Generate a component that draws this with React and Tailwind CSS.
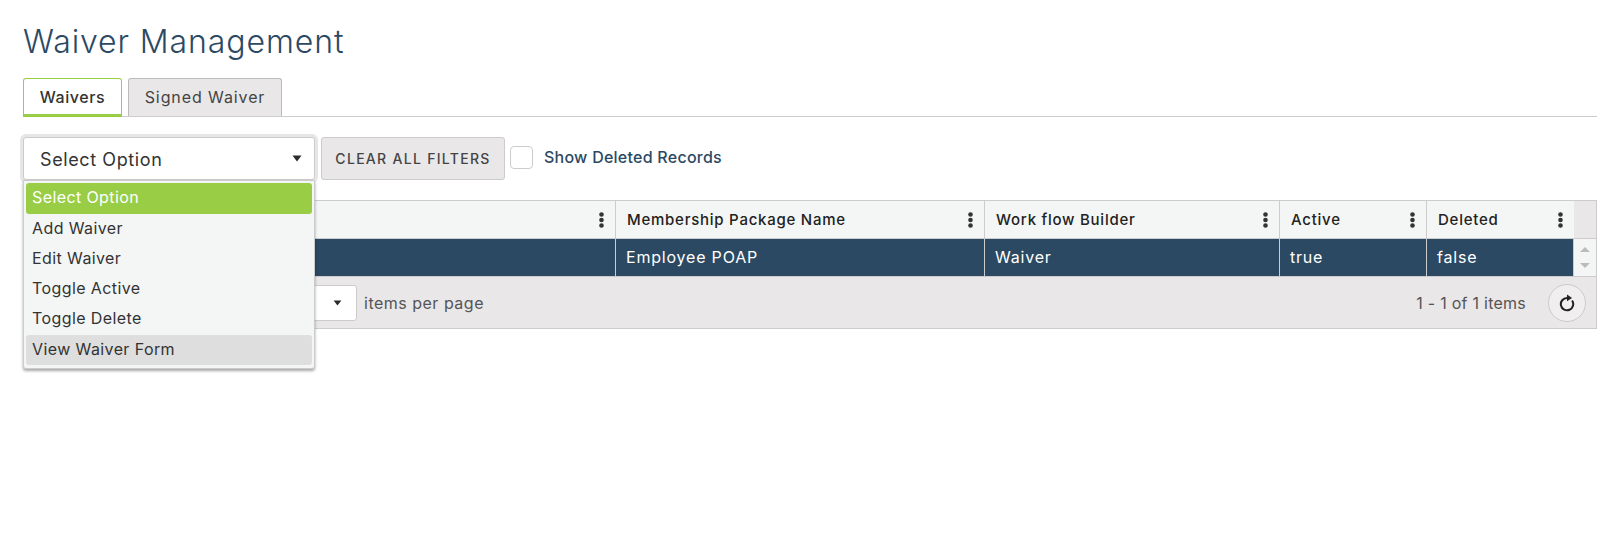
import React from 'react';

const menuItems = ['Add Waiver', 'Edit Waiver', 'Toggle Active', 'Toggle Delete'];

const columns = [
  { label: '', cell: '', width: 'w-[592px]' },
  { label: 'Membership Package Name', cell: 'Employee POAP', width: 'w-[369px]' },
  { label: 'Work flow Builder', cell: 'Waiver', width: 'w-[295px]' },
  { label: 'Active', cell: 'true', width: 'w-[147px]' },
  { label: 'Deleted', cell: 'false', width: 'w-[147px]' },
];

const Caret = ({ className }) => (
  <svg viewBox="0 0 10 7" className={className}>
    <path d="M0.5 0.5h9L5 6.5z" fill="#2b2b2b" />
  </svg>
);

const Kebab = () => (
  <svg viewBox="0 0 5 16" className="w-[5px] h-4 shrink-0">
    <circle cx="2.5" cy="2.5" r="2.3" fill="#333" />
    <circle cx="2.5" cy="8" r="2.3" fill="#333" />
    <circle cx="2.5" cy="13.5" r="2.3" fill="#333" />
  </svg>
);

const App = () => {
  return (
    <div className="relative h-[537px] bg-white px-[23px] font-['Inter',sans-serif] text-[#333]">
      <h1 className="pt-[21px] h-[78px] text-[32px] leading-[42px] font-light tracking-[0.9px] text-[#2c4963]">
        Waiver Management
      </h1>

      {/* Tabs */}
      <div className="flex h-[39px] w-[1574px] gap-[6px] border-b border-[#ccc]">
        <div className="w-[99px] h-[39px] flex items-center justify-center rounded-t-[3px] border border-b-[3px] border-[#98cd45] bg-white text-[16px] font-medium tracking-[0.6px] text-[#333]">
          Waivers
        </div>
        <div className="w-[154px] h-[38px] flex items-center justify-center pb-[2px] rounded-t-[3px] border border-b-0 border-[#bbb] bg-[#e9e7e8] text-[16px] tracking-[0.9px] text-[#444]">
          Signed Waiver
        </div>
      </div>

      {/* Filters */}
      <div className="flex items-start mt-[20px] h-[63px]">
        <div className="w-[292px] h-[43px] flex items-center justify-between pt-[2px] pl-[16px] pr-[12px] rounded-[3px] border border-[#ccc] bg-white shadow-[0_0_0_3px_#e6e6e6] text-[18px] tracking-[0.6px] text-[#333]">
          Select Option
          <Caret className="w-[10px] h-[7px] mb-[2px]" />
        </div>
        <div className="ml-[6px] w-[184px] h-[43px] flex items-center justify-center rounded-[3px] border border-[#ccc] bg-[#e9e7e8] text-[14px] font-medium tracking-[1.3px] text-[#444]">
          CLEAR ALL FILTERS
        </div>
        <div className="ml-[5px] mt-[9px] w-[23px] h-[23px] rounded-[4px] border border-[#ccc] bg-white" />
        <div className="ml-[11px] mt-[10px] text-[16px] leading-[20px] font-medium tracking-[0.25px] text-[#2c4963]">
          Show Deleted Records
        </div>
      </div>

      {/* Grid */}
      <div className="w-[1574px] border border-[#ccc]">
        <div className="flex h-[38px] bg-[#e9e7e8] border-b border-[#ccc]">
          {columns.map((col) => (
            <div key={col.label} className={`${col.width} flex items-center justify-between pl-[11px] pr-[11px] bg-[#f4f6f5] border-r border-[#ccc] text-[15px] font-[450] tracking-[0.75px] text-[#222] last:border-r-0`}>
              <span className="pt-[2px]">{col.label}</span>
              <Kebab />
            </div>
          ))}
        </div>
        <div className="flex h-[38px] bg-[#f4f6f5] border-b border-[#ccc]">
          {columns.map((col) => (
            <div key={col.label} className={`${col.width} flex items-center pl-[10px] pb-[2px] bg-[#2c4963] border-r border-[#ccc] text-[16px] tracking-[0.8px] text-white last:border-r-0`}>
              {col.cell}
            </div>
          ))}
          <div className="flex-1 flex flex-col items-center justify-center gap-[11px]">
            <span className="w-0 h-0 border-x-[5px] border-x-transparent border-b-[5px] border-b-[#bbb]" />
            <span className="w-0 h-0 border-x-[5px] border-x-transparent border-t-[5px] border-t-[#bbb]" />
          </div>
        </div>
        <div className="flex items-center h-[51px] bg-[#e9e7e8] pr-[10px]">
          <div className="ml-[260px] w-[73px] h-[36px] flex items-center justify-end pr-[14px] rounded-[3px] border border-[#ccc] bg-white">
            <Caret className="w-[9px] h-[6px]" />
          </div>
          <span className="ml-[7px] text-[16px] tracking-[0.5px] text-[#555]">items per page</span>
          <span className="ml-auto text-[16px] tracking-[0.25px] text-[#555]">1 - 1 of 1 items</span>
          <div className="ml-[22px] w-[38px] h-[38px] flex items-center justify-center rounded-full border border-[#ccc] bg-[#f0eeef]">
            <svg viewBox="0 0 16 16" className="w-[18px] h-[18px]" fill="none" stroke="#222" strokeWidth="1.8">
              <path d="M8 3.5A5.5 5.5 0 1 0 12.5 5.8" />
              <path d="M8 0.5L12.5 3.5L8 6.5z" fill="#222" stroke="none" />
            </svg>
          </div>
        </div>
      </div>

      {/* Open dropdown */}
      <div className="absolute left-[23px] top-[180px] w-[292px] h-[189px] flex flex-col p-[2px] rounded-b-[3px] border border-[#ccc] bg-[#f4f6f5] shadow-[0_2px_3px_rgba(0,0,0,0.35)] text-[16px] tracking-[0.4px] text-[#333]">
        <div className="h-[31px] shrink-0 flex items-center pl-[6px] pb-[3px] rounded-[3px] bg-[#98cd45] text-white">Select Option</div>
        {menuItems.map((item) => (
          <div key={item} className="h-[30px] shrink-0 flex items-center pl-[6px] pb-[2px]">{item}</div>
        ))}
        <div className="h-[30px] mt-[1px] shrink-0 flex items-center pl-[6px] pb-[2px] rounded-[3px] bg-[#dedede]">View Waiver Form</div>
      </div>
    </div>
  );
};

export default App;
